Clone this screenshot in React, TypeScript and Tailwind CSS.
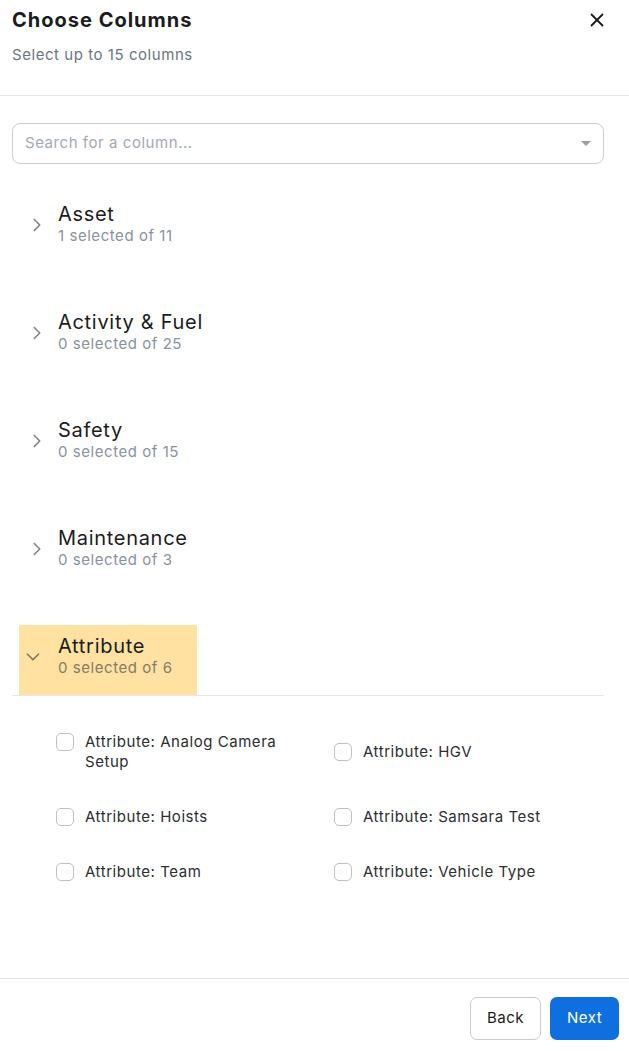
import { ChevronDown, ChevronRight, X } from "lucide-react";

const sections = [
  { name: "Asset", selected: 1, total: 11 },
  { name: "Activity & Fuel", selected: 0, total: 25 },
  { name: "Safety", selected: 0, total: 15 },
  { name: "Maintenance", selected: 0, total: 3 },
];

const attributes = [
  "Attribute: Analog Camera Setup",
  "Attribute: HGV",
  "Attribute: Hoists",
  "Attribute: Samsara Test",
  "Attribute: Team",
  "Attribute: Vehicle Type",
];

export default function App() {
  return (
    <div className="flex h-[1051px] w-[629px] flex-col bg-white font-['Inter',sans-serif] text-[#1b1c1e]">
      <div className="flex-1">
        {/* header */}
        <div className="flex items-start justify-between border-b border-[#e4e7eb] pt-[6px] pr-[21px] pb-[30px] pl-3">
          <div>
            <h1 className="text-[20px] leading-[28px] font-bold tracking-[1px]">
              Choose Columns
            </h1>
            <p className="mt-[11px] text-[15px] leading-[20px] tracking-[0.55px] text-[#6b7684]">
              Select up to 15 columns
            </p>
          </div>
          <button className="mt-[3px] text-[#1b1c1e]">
            <X size={22} strokeWidth={2} />
          </button>
        </div>

        <div className="pt-[27px] pr-[25px] pl-3">
          {/* search */}
          <div className="flex h-[41px] items-center justify-between rounded-lg border border-[#c8ced6] px-[12px]">
            <span className="text-[15px] tracking-[0.55px] text-[#a3aab4]">
              Search for a column...
            </span>
            <span className="h-0 w-0 border-x-[5px] border-t-[5px] border-x-transparent border-t-[#9aa1ab]" />
          </div>

          {/* sections */}
          <div className="mt-[29px] flex flex-col gap-[38px]">
            {sections.map((s) => (
              <div key={s.name} className="flex items-center pt-[9px] pb-[17px] pl-[14px]">
                <ChevronRight size={22} strokeWidth={1.8} className="mt-[1px] text-[#7c8591]" />
                <div className="ml-[10px]">
                  <div className="text-[20px] leading-[24px] tracking-[0.7px]">{s.name}</div>
                  <div className="text-[15px] leading-[20px] tracking-[0.55px] text-[#8893a1]">
                    {s.selected} selected of {s.total}
                  </div>
                </div>
              </div>
            ))}

            <div className="border-b border-[#e4e7eb]">
              <div className="ml-[7px] inline-flex items-center bg-[#ffe2a2] pt-[9px] pr-6 pb-[17px] pl-[3px]">
                <ChevronDown size={22} strokeWidth={1.8} className="mt-[1px] text-[#7d7560]" />
                <div className="ml-[14px]">
                  <div className="text-[20px] leading-[24px] tracking-[0.7px]">Attribute</div>
                  <div className="text-[15px] leading-[20px] tracking-[0.55px] text-[#847b66]">
                    0 selected of 6
                  </div>
                </div>
              </div>
            </div>
          </div>

          {/* attribute options */}
          <div className="grid grid-cols-[278px_278px] items-center gap-y-[35px] pt-9 pl-[44px]">
            {attributes.map((a) => (
              <label key={a} className="flex items-start gap-[11px] pr-[30px]">
                <span className="mt-[1px] h-[18px] w-[18px] shrink-0 rounded-[5px] border border-[#b9c1cb] bg-white" />
                <span className="text-[15px] leading-[20px] tracking-[0.55px] text-[#2c2e31]">
                  {a}
                </span>
              </label>
            ))}
          </div>
        </div>
      </div>

      {/* footer */}
      <div className="flex justify-end gap-[9px] border-t border-[#e4e7eb] pt-[18px] pr-[10px] pb-[11px]">
        <button className="h-[43px] w-[71px] rounded-[7px] border border-[#c4ccd5] bg-white text-[15px] tracking-[0.5px] text-[#1b1c1e]">
          Back
        </button>
        <button className="h-[43px] w-[69px] rounded-[7px] bg-[#0f6fde] text-[15px] tracking-[0.5px] text-white">
          Next
        </button>
      </div>
    </div>
  );
}
